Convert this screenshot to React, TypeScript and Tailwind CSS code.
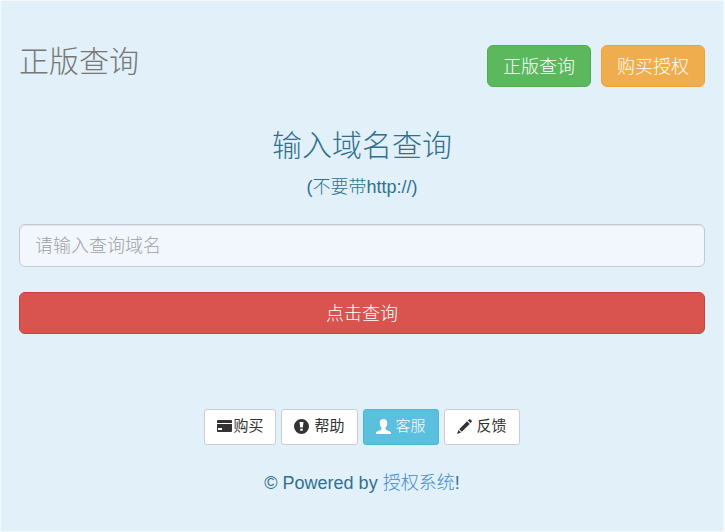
import { useState } from "react";
import type { FormEvent, ReactNode } from "react";

interface ToolButtonProps {
  label: string;
  icon: ReactNode;
  active?: boolean;
  tight?: boolean;
}

function CardIcon() {
  return (
    <svg className="size-[15px] shrink-0" viewBox="0 0 15 15" fill="currentColor" aria-hidden="true">
      <path d="M1 1h13a1 1 0 0 1 1 1v2H0V2a1 1 0 0 1 1-1z" />
      <path fillRule="evenodd" d="M0 5h15v7a1 1 0 0 1-1 1H1a1 1 0 0 1-1-1zM1 9v2h4V9z" />
    </svg>
  );
}

function AlertIcon() {
  return (
    <svg className="size-[15px] shrink-0" viewBox="0 0 15 15" fill="currentColor" aria-hidden="true">
      <path
        fillRule="evenodd"
        d="M7.500 0a7.500 7.500 0 1 1 0 15a7.500 7.500 0 0 1 0-15zM5.500 3l.7 5.500h2.600L9.500 3zM6.200 9.700v2.100h2.600V9.700z"
      />
    </svg>
  );
}

function UserIcon() {
  return (
    <svg className="size-[15px] shrink-0" viewBox="0 0 15 15" fill="currentColor" aria-hidden="true">
      <path d="M7.500 0C9.900 0 11.300 1.600 11.300 4c0 1.700-.6 3.400-1.700 4.500v1.300c0 .5.300.9.800 1.100l3.500 1.500c.7.300 1.100.8 1.100 1.500V15H0v-1.100c0-.7.400-1.200 1.100-1.500l3.500-1.500c.5-.2.8-.6.800-1.100V8.500C4.300 7.400 3.700 5.700 3.700 4C3.700 1.600 5.100 0 7.500 0z" />
    </svg>
  );
}

function PencilIcon() {
  return (
    <svg className="size-[15px] shrink-0" viewBox="0 0 15 15" fill="currentColor" aria-hidden="true">
      <path d="M12.100.4a1 1 0 0 1 1.300 0l1.200 1.200a1 1 0 0 1 0 1.300l-1.200 1.200-2.500-2.500zM10.100 2.300l2.600 2.600-7.900 7.900-2.600-2.600zM1.500 11l2.500 2.500L0 15z" />
    </svg>
  );
}

function ToolButton({ label, icon, active, tight }: ToolButtonProps) {
  return (
    <button
      type="button"
      className={`flex items-center rounded-[3px] border px-3 pt-[5px] pb-[7px] text-[15px] leading-[22px] ${
        tight ? "gap-px" : "gap-[5px]"
      } ${
        active
          ? "border-[#46b8da] bg-[#5bc0de] text-white"
          : "border-[#cccccc] bg-white font-normal text-[#333333]"
      }`}
    >
      {icon}
      <span>{label}</span>
    </button>
  );
}

export default function App() {
  const [domain, setDomain] = useState("");

  const handleSubmit = (e: FormEvent) => {
    e.preventDefault();
  };

  return (
    <div className="min-h-screen border border-r-2 border-[#f4f9fd] bg-[#e1f0f9] px-[18px] pt-11 pb-6 font-['Liberation_Sans','Noto_Sans_CJK_SC',sans-serif] font-light text-[#31708f]">
      {/* Header */}
      <header className="flex items-start justify-between">
        <h3 className="text-[30px] leading-[34px] text-[#777777]">正版查询</h3>
        <nav className="flex gap-2.5">
          <button
            type="button"
            className="rounded-md border border-[#4cae4c] bg-[#5cb85c] px-[15px] pt-[9px] pb-[7px] text-lg leading-6 text-white"
          >
            正版查询
          </button>
          <button
            type="button"
            className="rounded-md border border-[#eea236] bg-[#f0ad4e] px-[15px] pt-[9px] pb-[7px] text-lg leading-6 text-white"
          >
            购买授权
          </button>
        </nav>
      </header>

      {/* Query form */}
      <form onSubmit={handleSubmit} className="mt-[41px]">
        <label htmlFor="domain" className="block text-center">
          <span className="block text-[30px] leading-9">输入域名查询</span>
          <span className="mt-[11px] block text-lg leading-6">(不要带http://)</span>
        </label>
        <input
          id="domain"
          type="text"
          value={domain}
          onChange={(e) => setDomain(e.target.value)}
          placeholder="请输入查询域名"
          className="mt-[25px] block h-[43px] w-full rounded-md border border-[#c3c9d0] bg-[#f2f7fe] px-[15px] pt-0.5 text-lg text-[#555555] shadow-[inset_0_1px_1px_rgba(0,0,0,0.075)] outline-none placeholder:text-[#a0a0a0]"
        />
        <button
          type="submit"
          className="mt-[25px] block w-full rounded-md border border-[#c9423f] bg-[#d9534f] px-4 pt-[9px] pb-[7px] text-lg leading-6 text-white"
        >
          点击查询
        </button>
      </form>

      {/* Shortcuts */}
      <div className="mt-[75px] flex flex-wrap justify-center gap-[5px]">
        <ToolButton label="购买" icon={<CardIcon />} tight />
        <ToolButton label="帮助" icon={<AlertIcon />} />
        <ToolButton label="客服" icon={<UserIcon />} active />
        <ToolButton label="反馈" icon={<PencilIcon />} />
      </div>

      <footer className="mt-6 text-center text-lg leading-7">
        © Powered by{" "}
        <a href="#" className="text-[#428bca]">
          授权系统
        </a>
        !
      </footer>
    </div>
  );
}
